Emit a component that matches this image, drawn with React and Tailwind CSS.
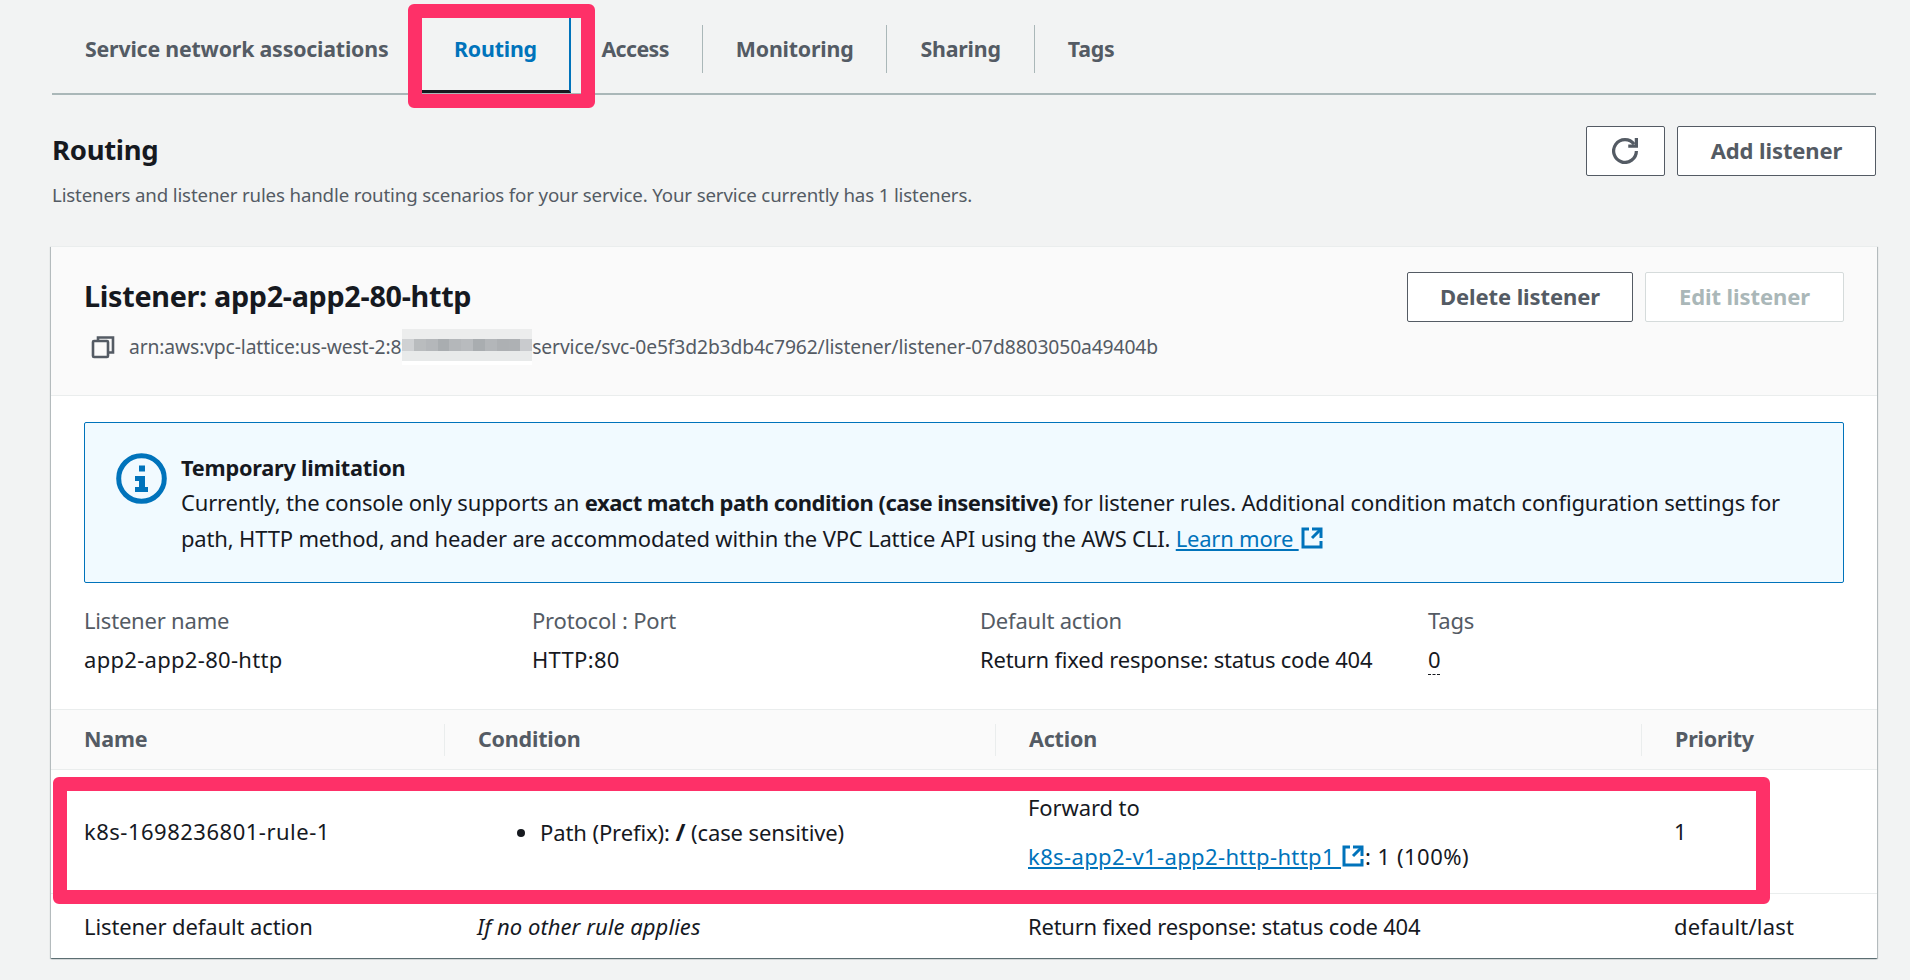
import React from 'react';

const font = { fontFamily: '"Noto Sans", sans-serif' };

const ExternalIcon = ({ className }) => (
  <svg className={className} viewBox="0 0 16 16" fill="none" stroke="currentColor" strokeWidth="2">
    <path d="M14 8V2H8" />
    <path d="M14 2 8 8" />
    <path d="M6 2H2v12h12v-4" />
  </svg>
);

const Tab = ({ label, first, tight }) => (
  <div className="h-full pt-[7px]">
    <div className={`h-[48px] flex items-center px-[33px] ${first ? '' : 'border-l border-[#aab7b8]'}`}>
      <span className={`text-[21.35px] font-bold text-[#545b64] whitespace-nowrap ${tight ? 'tracking-[-0.6px]' : 'tracking-[-0.2px]'}`}>{label}</span>
    </div>
  </div>
);

const Button = ({ children, disabled, className = '' }) => (
  <button
    className={`h-[50px] rounded-[2px] border flex items-center justify-center pb-[1px] text-[22px] font-bold tracking-[-0.1px] ${
      disabled ? 'border-[#d5dbdb] bg-white text-[#aab7b8]' : 'border-[#545b64] bg-white text-[#545b64]'
    } ${className}`}
  >
    {children}
  </button>
);

const blurCols = ['#cfd1d3', '#b9bcbe', '#b4b7ba', '#a9adb0', '#b4b7ba', '#b8bbbe', '#a9adb0', '#b3b6b9', '#adb0b3', '#aeb1b4', '#c9cbce'];

const Blur = () => (
  <span className="relative inline-flex flex-col w-[130px] h-[36px] -ml-[10px]">
    <span className="h-[10px] bg-[#eceded]" />
    <span className="flex h-[12px]">
      {blurCols.map((c, i) => (
        <span key={i} className="flex-1" style={{ background: c }} />
      ))}
    </span>
    <span className="h-[10px] bg-[#e8eaea]" />
    <span className="h-[4px] bg-white" />
  </span>
);

const HeaderCell = ({ label, divider }) => (
  <div className="flex items-center h-full">
    <div className={`h-[32px] flex items-center ${divider ? 'border-l border-[#eaeded] pl-[33px]' : 'pl-[33px]'}`}>
      <span className="text-[21.5px] font-bold text-[#545b64] tracking-[-0.2px]">{label}</span>
    </div>
  </div>
);

const KeyValue = ({ label, children, valueClass = 'tracking-[-0.22px]' }) => (
  <div>
    <div className="text-[22px] text-[#545b64] h-[24px] leading-[24px] tracking-[-0.2px]">{label}</div>
    <div className={`text-[22px] text-[#16191f] h-[24px] leading-[24px] mt-[15px] ${valueClass}`}>{children}</div>
  </div>
);

const tableCols = 'grid grid-cols-[393px_551px_646px_236px]';

export default function App() {
  return (
    <div className="relative w-[1910px] h-[980px] overflow-hidden bg-[#f2f3f3]" style={font}>
      {/* tabs */}
      <div className="ml-[52px] w-[1824px] pt-[18px]">
        <div className="flex h-[77px] border-b-2 border-[#aab7b8]">
          <Tab label="Service network associations" first />
          <div className="w-[150px] -mr-[3px] h-[75px] border-b-[3px] border-b-[#16191f] border-r-2 border-r-[#0073bb] flex items-start justify-center pt-[7px]">
            <span className="h-[48px] flex items-center text-[21.35px] font-bold text-[#0073bb] tracking-[-0.2px]">Routing</span>
          </div>
          <Tab label="Access" first tight />
          <Tab label="Monitoring" />
          <Tab label="Sharing" />
          <Tab label="Tags" />
        </div>

        {/* section header */}
        <div className="flex justify-between mt-[31px]">
          <div>
            <h2 className="h-[50px] pb-[2px] flex items-center text-[27.5px] font-bold text-[#16191f] tracking-[-0.3px]">Routing</h2>
            <p className="mt-[7px] h-[24px] leading-[24px] text-[18.7px] text-[#545b64] tracking-[-0.15px]">
              Listeners and listener rules handle routing scenarios for your service. Your service currently has 1 listeners.
            </p>
          </div>
          <div className="flex gap-[12px]">
            <Button className="w-[79px]">
              <svg className="w-[26px] h-[26px] -ml-[2px]" viewBox="0 0 16 16" fill="none" stroke="currentColor" strokeWidth="2">
                <path d="M10 5h5V0" />
                <path d="M15 8a7 7 0 1 1-1.4-4.2" />
              </svg>
            </Button>
            <Button className="w-[199px]">Add listener</Button>
          </div>
        </div>
      </div>

      {/* card */}
      <div className="ml-[51px] w-[1826px] mt-[39px] bg-white border-t border-[#eaeded] shadow-[0_1px_1px_0_rgba(0,28,36,0.4),1px_1px_1px_0_rgba(0,28,36,0.2),-1px_1px_1px_0_rgba(0,28,36,0.2)]">
        <div className="relative h-[149px] bg-[#fafafa] border-b border-[#eaeded] px-[33px] flex justify-between">
          <div>
            <h3 className="mt-[31px] h-[36px] flex items-center text-[28.75px] font-bold text-[#16191f] tracking-[-0.3px]">Listener: app2-app2-80-http</h3>
            <div className="mt-[15px] flex items-center h-[36px]">
              <svg className="w-[24px] h-[24px] ml-[7px] text-[#545b64]" viewBox="0 0 24 24" fill="none" stroke="currentColor" strokeWidth="2.6">
                <rect x="2" y="6" width="15" height="16" rx="1" />
                <path d="M7 5V2.5h15v15h-4" />
              </svg>
              <span className="ml-[14px] text-[19.3px] text-[#545b64] tracking-[-0.13px] flex items-center whitespace-nowrap">
                arn:aws:vpc-lattice:us-west-2:89
                <Blur />
                service/svc-0e5f3d2b3db4c7962/listener/listener-07d8803050a49404b
              </span>
            </div>
          </div>
          <div className="flex gap-[12px] mt-[25px]">
            <Button className="w-[226px]">Delete listener</Button>
            <Button disabled className="w-[199px]">Edit listener</Button>
          </div>
        </div>

        <div className="px-[33px] pt-[26px]">
          {/* flash */}
          <div className="h-[161px] rounded-[2px] border border-[#0073bb] bg-[#f1faff] flex pl-[31px] pt-[30px]">
            <svg className="w-[51px] h-[51px] shrink-0 text-[#0073bb]" viewBox="0 0 51 51" fill="none">
              <circle cx="25.5" cy="25.5" r="22.8" stroke="currentColor" strokeWidth="5" />
              <rect x="23" y="12.5" width="6" height="6" fill="currentColor" />
              <path d="M19 23h10v11h3v5H19v-5h4v-6h-4z" fill="currentColor" />
            </svg>
            <div className="ml-[14px] -mt-[3px] text-[22px] text-[#16191f] tracking-[-0.17px] leading-[36px] whitespace-nowrap">
              <div className="font-bold h-[34px] text-[21.7px] tracking-[-0.22px]">Temporary limitation</div>
              <div>
                Currently, the console only supports an <b className="tracking-[-0.5px]">exact match path condition (case insensitive)</b> for listener rules. Additional condition match configuration settings for
              </div>
              <div className="flex items-center">
                <span>path, HTTP method, and header are accommodated within the VPC Lattice API using the AWS CLI.&nbsp;</span>
                <a className="text-[#0073bb] underline decoration-2 underline-offset-2 tracking-[-0.22px]">Learn more&nbsp;</a>
                <ExternalIcon className="w-[24px] h-[24px] ml-[1px] text-[#0073bb]" />
              </div>
            </div>
          </div>

          {/* listener details */}
          <div className="grid grid-cols-4 w-[1792px] mt-[25px] h-[101px]">
            <KeyValue label="Listener name" valueClass="tracking-[0.3px]">app2-app2-80-http</KeyValue>
            <KeyValue label="Protocol : Port" valueClass="tracking-[0.3px]">HTTP:80</KeyValue>
            <KeyValue label="Default action">Return fixed response: status code 404</KeyValue>
            <KeyValue label="Tags">
              <span className="border-b border-dashed border-[#16191f]">0</span>
            </KeyValue>
          </div>
        </div>

        {/* rules table */}
        <div className={`${tableCols} h-[61px] bg-[#fafafa] border-y border-[#eaeded]`}>
          <HeaderCell label="Name" />
          <HeaderCell label="Condition" divider />
          <HeaderCell label="Action" divider />
          <HeaderCell label="Priority" divider />
        </div>
        <div className={`${tableCols} h-[124px] border-b border-[#eaeded] text-[22px] text-[#16191f] tracking-[-0.1px]`}>
          <div className="pl-[33px] flex items-center tracking-[0.5px]">k8s-1698236801-rule-1</div>
          <div className="pl-[33px] flex items-center">
            <ul className="list-disc pl-[63px]">
              <li>
                Path (Prefix): <b className="text-[24px]">/</b> (case sensitive)
              </li>
            </ul>
          </div>
          <div className="pl-[33px] flex flex-col justify-center gap-[25px]">
            <div className="h-[24px] leading-[24px]">Forward to</div>
            <div className="h-[24px] leading-[24px] flex items-center whitespace-pre">
              <a className="text-[#0073bb] underline underline-offset-2 tracking-[0.38px]">k8s-app2-v1-app2-http-http1 </a>
              <ExternalIcon className="w-[24px] h-[24px] text-[#0073bb]" />
              <span className="tracking-[0.5px]">: 1 (100%)</span>
            </div>
          </div>
          <div className="pl-[33px] flex items-center">1</div>
        </div>
        <div className={`${tableCols} h-[64px] text-[22px] text-[#16191f] items-center`}>
          <div className="pl-[33px] tracking-[-0.1px]">Listener default action</div>
          <div className="pl-[33px] italic tracking-[0.05px]">If no other rule applies</div>
          <div className="pl-[33px] tracking-[-0.22px]">Return fixed response: status code 404</div>
          <div className="pl-[33px] tracking-[0.2px]">default/last</div>
        </div>
      </div>

      {/* pink annotation boxes */}
      <div className="absolute left-[408px] top-[4px] w-[187px] h-[104px] rounded-[6px] border-[14px] border-[#fe3068]" />
      <div className="absolute left-[53px] top-[777px] w-[1717px] h-[127px] rounded-[6px] border-[14px] border-[#fe3068]" />
    </div>
  );
}
